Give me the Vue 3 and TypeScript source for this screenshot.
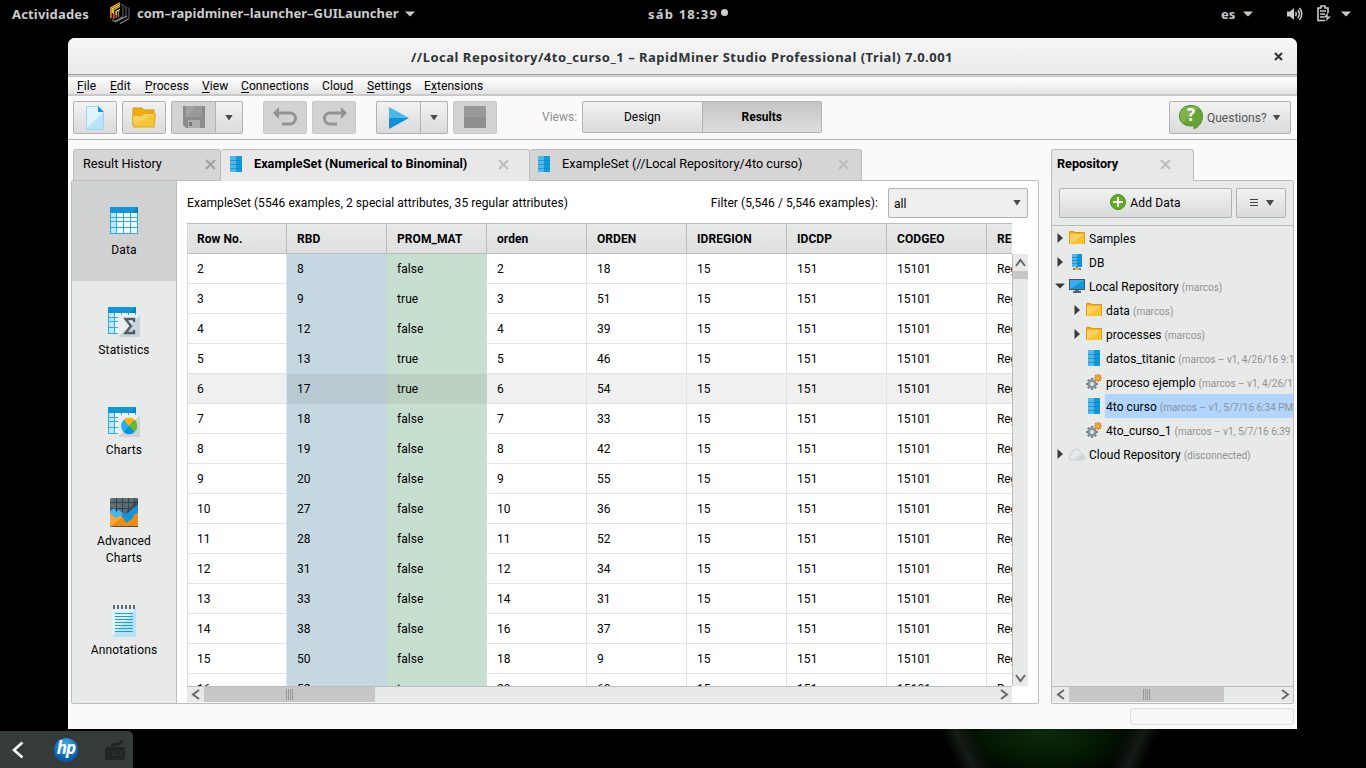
<script setup lang="ts">
interface MenuEntry { pre: string; key: string; post: string; width: number }
interface TreeNode {
  label: string
  note?: string
  icon: 'folder' | 'db' | 'screen' | 'data' | 'process' | 'cloud'
  level: number
  toggle?: 'open' | 'closed'
  selected?: boolean
}

const menus: MenuEntry[] = [
  { pre: '', key: 'F', post: 'ile', width: 33 },
  { pre: '', key: 'E', post: 'dit', width: 35 },
  { pre: '', key: 'P', post: 'rocess', width: 57 },
  { pre: '', key: 'V', post: 'iew', width: 39 },
  { pre: '', key: 'C', post: 'onnections', width: 81 },
  { pre: 'Clou', key: 'd', post: '', width: 45 },
  { pre: '', key: 'S', post: 'ettings', width: 57 },
  { pre: 'E', key: 'x', post: 'tensions', width: 70 },
]

const columns: string[] = ['Row No.', 'RBD', 'PROM_MAT', 'orden', 'ORDEN', 'IDREGION', 'IDCDP', 'CODGEO', 'REGION']

const source: [number, number, boolean, number, number][] = [
  [2, 8, false, 2, 18],
  [3, 9, true, 3, 51],
  [4, 12, false, 4, 39],
  [5, 13, true, 5, 46],
  [6, 17, true, 6, 54],
  [7, 18, false, 7, 33],
  [8, 19, false, 8, 42],
  [9, 20, false, 9, 55],
  [10, 27, false, 10, 36],
  [11, 28, false, 11, 52],
  [12, 31, false, 12, 34],
  [13, 33, false, 14, 31],
  [14, 38, false, 16, 37],
  [15, 50, false, 18, 9],
  [16, 52, true, 20, 60],
]
const rows = source.map((r) => [...r.map(String), '15', '151', '15101', 'Region'])

const tree: TreeNode[] = [
  { label: 'Samples', icon: 'folder', level: 0, toggle: 'closed' },
  { label: 'DB', icon: 'db', level: 0, toggle: 'closed' },
  { label: 'Local Repository', note: '(marcos)', icon: 'screen', level: 0, toggle: 'open' },
  { label: 'data', note: '(marcos)', icon: 'folder', level: 1, toggle: 'closed' },
  { label: 'processes', note: '(marcos)', icon: 'folder', level: 1, toggle: 'closed' },
  { label: 'datos_titanic', note: '(marcos – v1, 4/26/16 9:13 PM)', icon: 'data', level: 1 },
  { label: 'proceso ejemplo', note: '(marcos – v1, 4/26/16 9:20 PM)', icon: 'process', level: 1 },
  { label: '4to curso', note: '(marcos – v1, 5/7/16 6:34 PM)', icon: 'data', level: 1, selected: true },
  { label: '4to_curso_1', note: '(marcos – v1, 5/7/16 6:39 PM)', icon: 'process', level: 1 },
  { label: 'Cloud Repository', note: '(disconnected)', icon: 'cloud', level: 0, toggle: 'closed' },
]
const teeth = [0, 45, 90, 135, 180, 225, 270, 315]
</script>

<template>
  <div class="desktop">
    <header class="topbar">
      <span class="activities">Actividades</span>
      <svg class="app-logo" width="20" height="22" viewBox="0 0 20 22" fill="none" stroke-width="1.3">
        <path d="M.8 16V6L10 .8M3.6 17V8L10 4.2" stroke="#f4b63a" />
        <path d="M.8 16V10M3.6 17V12M6.2 16V11" stroke="#f0602a" />
        <path d="M6.2 13V9.5L10 7.5M2.200 11V7L10 2.500" stroke="#ffe32a" />
        <path d="M11 2l2 1v12M14.500 4l1.500 1v11M17.500 5.500l1.500 1V16" stroke="#4d4d55" />
        <path d="M2 18l3 1.500L13 15M5 20l12-6M10 21.500l9-5M8.500 15V9" stroke="#8a8a90" />
      </svg>
      <span class="app-name">com–rapidminer–launcher–GUILauncher</span>
      <svg class="caret" width="10" height="6"><path d="M0 .5h10L5 5.500z" fill="#ccc" /></svg>
      <span class="clock">sáb 18:39</span>
      <i class="clock-dot"></i>
      <span class="lang">es</span>
      <svg class="caret lang-caret" width="10" height="6"><path d="M0 .5h10L5 5.500z" fill="#ccc" /></svg>
      <svg class="volume" width="16" height="16" viewBox="0 0 16 16" fill="none" stroke="#ccc" stroke-width="1.500">
        <path d="M0 5.500h3L7 2v12l-4-3.500H0z" fill="#ccc" stroke="none" />
        <path d="M8.500 6q1.500 2 0 4M10.800 4q3 4 0 8M12.500 2q4.500 6 0 12" />
      </svg>
      <svg class="battery" width="15" height="17" viewBox="0 0 15 17" fill="none" stroke="#ccc" stroke-width="1.600">
        <path d="M8 15.500H1V3h3V1h4v2h3v5M3 6h6M3 9h5M3 12h4" />
        <path d="M11 7.500L6.500 12.500H10L8.500 16.500l5.500-5h-3.500z" fill="#ccc" stroke="none" />
      </svg>
      <svg class="caret" width="10" height="6"><path d="M0 .5h10L5 5.500z" fill="#ccc" /></svg>
    </header>

    <main class="window">
      <div class="titlebar">
        <span class="title">//Local Repository/4to_curso_1 – RapidMiner Studio Professional (Trial) 7.0.001</span>
        <svg class="win-close" width="9" height="9"><path d="M1 1l7 7M8 1L1 8" stroke="#2e3436" stroke-width="2" /></svg>
      </div>
      <nav class="menubar">
        <span v-for="m in menus" :key="m.post + m.pre" :style="{ width: m.width + 'px' }" class="menu"><span>{{ m.pre }}<u>{{ m.key }}</u>{{ m.post }}</span></span>
      </nav>

      <div class="toolbar">
        <button class="btn tool">
          <svg width="18" height="24"><path d="M.5.5H12l5.500 6v17H.5z" fill="#b9e3f8" stroke="#9fd3ed" /><path d="M1 1h11l5 6L1 22z" fill="#e0f3fc" /><path d="M12 0v6h6z" fill="#1596d4" /></svg>
        </button>
        <button class="btn tool">
          <svg width="24" height="21"><path d="M1 18V1h9l2 2h10v10z" fill="#f2ab0c" stroke="#d99808" /><path d="M.5 8.500l9 .5 2-2h12l-1.500 13H1.500z" fill="#f6c535" stroke="#e1a81b" /><path d="M1 9h9l2-2h11L2 18z" fill="#f7d063" /></svg>
        </button>
        <div class="btn split">
          <span class="tool-half off">
            <svg width="22" height="22"><path d="M0 0h22v22H3l-3-3z" fill="#8b8b8b" /><path d="M3 0h16v11H3z" fill="#a2a2a2" /><path d="M12 0h7v11H5z" fill="#999" /><path d="M5 14h12v8H5z" fill="#adadad" /><path d="M6 16h3v4H6z" fill="#777" /></svg>
          </span>
          <span class="arrow-half"><i class="down"></i></span>
        </div>
        <button class="btn tool off gap20">
          <svg width="25" height="20" fill="none" stroke="#939393" stroke-width="3"><path d="M5 6h12a5.500 5.500 0 0 1 0 11H9" /><path d="M0 6l6-6v12z" fill="#939393" stroke="none" /></svg>
        </button>
        <button class="btn tool off">
          <svg width="25" height="20" fill="none" stroke="#939393" stroke-width="3"><path d="M20 6H8a5.500 5.500 0 0 0 0 11h7" /><path d="M25 6l-6-6v12z" fill="#939393" stroke="none" /></svg>
        </button>
        <div class="btn split gap20">
          <span class="tool-half"><svg width="20" height="22"><path d="M0 0l20 11H0z" fill="#49b8ea" /><path d="M0 22l20-11H0z" fill="#0f90d8" /></svg></span>
          <span class="arrow-half"><i class="down"></i></span>
        </div>
        <button class="btn tool off"><svg class="stop" width="22" height="22"><path d="M0 0h22v11H0z" fill="#999" /><path d="M0 11h22v11H0z" fill="#8e8e8e" /></svg></button>
        <span class="views-label">Views:</span>
        <div class="views"><span>Design</span><span class="current">Results</span></div>
        <button class="btn questions">
          <svg width="24" height="24"><path d="M12 .5C5 .5.5 5 .5 11S5 21 12 21l3-.5v3.300C20 22 23.500 17 23.500 11 23.500 5 19 .5 12 .5z" fill="#67a33b" stroke="#548c2c" /><path d="M19 3L4 18C-2 10 2 2 12 1q4 0 7 2z" fill="#80b34a" /></svg>
          <b class="q-mark">?</b>
          <span>Questions?</span><i class="down"></i>
        </button>
      </div>

      <div class="workspace">
        <section class="results">
          <div class="tabs">
            <div class="tab history"><span>Result History</span><svg class="x dark" width="11" height="11"><path d="M1 1l9 9M10 1l-9 9" /></svg></div>
            <div class="tab active">
              <svg class="data-icon" width="12" height="16"><path d="M0 0h12v16H0z" fill="#119ad9" /><path d="M0 0h6v16H0z" fill="#4cb9ea" /><path d="M0 4.500h12M0 8.500h12M0 12.500h12" stroke="#0876b0" stroke-opacity=".5" /></svg>
              <b>ExampleSet (Numerical to Binominal)</b><svg class="x" width="11" height="11"><path d="M1 1l9 9M10 1l-9 9" /></svg>
            </div>
            <div class="tab third">
              <svg class="data-icon" width="12" height="16"><path d="M0 0h12v16H0z" fill="#119ad9" /><path d="M0 0h6v16H0z" fill="#4cb9ea" /><path d="M0 4.500h12M0 8.500h12M0 12.500h12" stroke="#0876b0" stroke-opacity=".5" /></svg>
              <span>ExampleSet (//Local Repository/4to curso)</span><svg class="x" width="11" height="11"><path d="M1 1l9 9M10 1l-9 9" /></svg>
            </div>
          </div>

          <div class="panel">
            <aside class="sidebar">
              <div v-for="name in ['Data', 'Statistics', 'Charts']" :key="name" class="side" :class="{ chosen: name === 'Data', shifted: name !== 'Data' }">
                <svg width="32" height="30">
                  <path d="M0 0h28v27H0z" fill="#2eaae8" />
                  <path d="M1 6h5v4H1zM1 11h5v3H1zM1 15h5v5H1zM1 21h5v5H1z" fill="#bfe6fa" />
                  <path d="M7 6h6v4H7zM14 6h6v4h-6zM21 6h6v4h-6zM7 11h6v3H7zM14 11h6v3h-6zM21 11h6v3h-6zM7 15h6v5H7zM14 15h6v5h-6zM21 15h6v5h-6zM7 21h6v5H7zM14 21h6v5h-6zM21 21h6v5h-6z" fill="#f1fafe" />
                  <path d="M0 0h28v6H0z" fill="#1296db" /><path d="M28 0v6h-6z" fill="#0b7fbe" />
                  <g v-if="name !== 'Data'">
                    <path d="M10 8h22v22H10z" fill="#ebeeef" /><path d="M32 8v22H10z" fill="#cbd4d8" />
                    <path v-if="name === 'Statistics'" d="M26 15v-3H17.500l5.500 7-5.500 7H26v-3" fill="none" stroke="#4d6069" stroke-width="2.400" />
                    <template v-else>
                      <circle cx="21" cy="19" r="8" fill="#27b0f0" />
                      <path d="M21 19l-5-6.500a8 8 0 0 1 10.500 0z" fill="#ffb400" />
                      <path d="M21 19l5.500-6.200a8 8 0 0 1 0 12z" fill="#68b723" />
                      <path d="M21 19l5.500 6a8 8 0 0 1-11 0z" fill="#0b8fe0" />
                    </template>
                  </g>
                </svg>
                <span>{{ name }}</span>
              </div>
              <div class="side advanced">
                <svg width="28" height="29">
                  <rect width="28" height="29" rx="1.500" fill="#5c6e76" /><path d="M28 0v29H3z" fill="#42525a" />
                  <path d="M6.500 0v14M12.500 0v14M18.500 0v14M24.500 0v14M0 4.500h28M0 10.500h28" stroke="#34434a" />
                  <path d="M0 14l4-4 2 4 3-2 4 4 5-1 3-3 4-3 3-2v18H0z" fill="#1196dc" /><path d="M0 14l4-4 2 4 3-2 4 4-8 8-5-4z" fill="#40b9f0" />
                  <path d="M0 15l3 3 3 2 4-2 4 3 2 4 6-4 3-5 3-1v13H1l-1-1z" fill="#ef8d10" /><path d="M0 15l3 3 3 2 4-2 3 1L1 28H0z" fill="#f5a63d" />
                </svg>
                <span>Advanced<br />Charts</span>
              </div>
              <div class="side annotations">
                <svg width="24" height="33"><path d="M0 3h24v29H0z" fill="#b9e2f7" /><path d="M0 3h24L0 32z" fill="#dff3fd" /><path d="M2 0v4M6 0v4M10 0v4M14 0v4M18 0v4M22 0v4" stroke="#5c6b73" stroke-width="2" /><path d="M3 8.500h18M3 11.500h18M3 14.500h18M3 17.500h18M3 20.500h18M3 23.500h18M3 26.500h18" stroke="#1b9ce2" /></svg>
                <span>Annotations</span>
              </div>
            </aside>

            <div class="content">
              <div class="info">
                <span>ExampleSet (5546 examples, 2 special attributes, 35 regular attributes)</span>
                <span class="filter">Filter (5,546 / 5,546 examples):</span>
                <div class="select"><span>all</span><i class="down"></i></div>
              </div>
              <div class="grid">
                <div class="grid-left">
                  <div class="grid-head"><span v-for="c in columns" :key="c" class="cell">{{ c }}</span></div>
                  <div class="grid-body">
                    <div v-for="(row, i) in rows" :key="i" class="row" :class="{ hover: i === 4 }"><span v-for="(v, j) in row" :key="j" class="cell">{{ v }}</span></div>
                  </div>
                  <div class="hscroll">
                    <svg class="chev" width="17" height="15"><path d="M12 3L6 7.500l6 4.500" /></svg>
                    <div class="thumb main-thumb"><i class="grip"></i></div>
                    <svg class="chev end" width="17" height="15"><path d="M6 3l6 4.500L6 12" /></svg>
                  </div>
                </div>
                <div class="vscroll">
                  <svg class="chev" width="15" height="17"><path d="M3 12l4.500-6 4.500 6" /></svg>
                  <div class="vthumb"></div>
                  <svg class="chev bottom" width="15" height="17"><path d="M3 6l4.500 6L12 6" /></svg>
                </div>
              </div>
            </div>
          </div>
        </section>

        <section class="repository">
          <div class="tab repo-tab"><b>Repository</b><svg class="x" width="11" height="11"><path d="M1 1l9 9M10 1l-9 9" /></svg></div>
          <div class="repo-panel">
            <div class="repo-actions">
              <button class="btn add">
                <svg width="16" height="16"><circle cx="8" cy="8" r="7.500" fill="#5fae22" stroke="#46901a" /><path d="M8 3v10M3 8h10" stroke="#fff" stroke-width="2" /></svg>
                <span>Add Data</span>
              </button>
              <button class="btn options"><svg width="8" height="8"><path d="M0 .5h8M0 3.500h8M0 6.500h8" stroke="#444" /></svg><i class="down"></i></button>
            </div>
            <div class="tree">
              <div v-for="n in tree" :key="n.label" class="node" :class="{ nested: n.level === 1 }">
                <span class="toggle"><svg v-if="n.toggle === 'closed'" width="6" height="10"><path d="M.5 0L6 5 .5 10z" fill="#3b3b3b" /></svg><svg v-if="n.toggle === 'open'" class="open" width="10" height="6"><path d="M0 .5h10L5 5.500z" fill="#3b3b3b" /></svg></span>
                <svg v-if="n.icon === 'folder'" class="ico" width="16" height="16"><path d="M.5 13.500v-12H5l1 1h9.500v11z" fill="#f3ad12" stroke="#dd9b0b" /><path d="M1 4h14v10H1z" fill="#f5c42f" /><path d="M1 4h14L1 14z" fill="#f8d161" /></svg>
                <svg v-else-if="n.icon === 'db'" class="ico" width="16" height="16"><path d="M3 0h10v13H3z" fill="#0f96d8" /><path d="M3 0h5v13H3z" fill="#4bb9e9" /><path d="M3 3.500h10M3 6.500h10M3 9.500h10" stroke="#0873ad" stroke-opacity=".55" /><path d="M8 13v2M4 15h8" stroke="#777" stroke-width="2" /><path d="M6 14h4v2H6z" fill="#f6b51c" /></svg>
                <svg v-else-if="n.icon === 'screen'" class="ico" width="16" height="16"><path d="M0 1h16v11H0z" fill="#45545c" /><path d="M1 2h14v9H1z" fill="#1597dc" /><path d="M1 2h14L1 11z" fill="#35b0ed" /><path d="M6 12h4v1h2v2H4v-2h2z" fill="#56646c" /></svg>
                <svg v-else-if="n.icon === 'data'" class="ico" width="16" height="16"><path d="M2 0h12v16H2z" fill="#119ad9" /><path d="M2 0h6v16H2z" fill="#4cb9ea" /><path d="M2 4.500h12M2 8.500h12M2 12.500h12" stroke="#0876b0" stroke-opacity=".5" /></svg>
                <svg v-else-if="n.icon === 'process'" class="ico" width="16" height="16">
                  <g stroke="#687983" stroke-width="2"><path v-for="a in teeth" :key="a" d="M6 4v3" :transform="`rotate(${a} 6 10)`" /></g><circle cx="6" cy="10" r="3.300" fill="none" stroke="#84959d" stroke-width="2.800" />
                  <g stroke="#ef8318" stroke-width="1.600"><path v-for="a in teeth" :key="a" d="M12 0v2" :transform="`rotate(${a} 12 4)`" /></g><circle cx="12" cy="4" r="2" fill="none" stroke="#f29330" stroke-width="2" />
                </svg>
                <svg v-else class="ico" width="16" height="16"><path d="M3 14a3 3 0 0 1 0-6 4 4 0 0 1 4-5q3-1 4.500 3.500Q15.500 8 15.500 12q0 2-2 2z" fill="#e5e9eb" stroke="#c7cdd0" /><path d="M13 8L5 13.500h8q2-1 2-3z" fill="#cfd6d9" /></svg>
                <span class="node-text" :class="{ selected: n.selected }">{{ n.label }}<small v-if="n.note">{{ n.note }}</small></span>
              </div>
            </div>
            <div class="hscroll">
              <svg class="chev" width="17" height="15"><path d="M12 3L6 7.500l6 4.500" /></svg>
              <div class="thumb repo-thumb"><i class="grip"></i></div>
              <svg class="chev end" width="17" height="15"><path d="M6 3l6 4.500L6 12" /></svg>
            </div>
          </div>
        </section>
      </div>
      <div class="statusbar"><div class="progress"></div></div>
    </main>

    <div class="glow"></div>
    <div class="dock">
      <svg class="back" width="12" height="18"><path d="M10.500 1.500L2 9l8.500 7.500" fill="none" stroke="#fff" stroke-width="2.600" /></svg>
      <div class="hp"><span>hp</span></div>
      <svg class="keyboard" width="24" height="22"><path d="M3 8h18l1 3v9l-2 1H3l-1-1v-9z" fill="#202525" /><path d="M9 8q0-3 4-3 5 1 6-4" fill="none" stroke="#202525" stroke-width="3" /><path d="M5 13h2M9 13h2M13 13h2M17 13h2M5 16h2M9 16h6M17 16h2" stroke="#343a3a" /></svg>
    </div>
  </div>
</template>

<style>
html, body { margin: 0; background: #000; overflow: hidden; }
</style>

<style scoped>
* { box-sizing: border-box; }
.desktop { position: relative; width: 1366px; height: 768px; background: #000; overflow: hidden; font: 12px/16px Roboto, sans-serif; color: #000; }
svg { display: block; flex: none; }
.topbar { height: 38px; display: flex; align-items: flex-start; padding: 4px 15px 0 12px; color: #ccc; font: bold 13px/20px "Noto Sans", sans-serif; white-space: nowrap; }
.activities { width: 98px; letter-spacing: 0.17px; }
.app-logo { margin-top: -2px; }
.app-name { width: 262px; margin-left: 7px; margin-top: -1px; }
.caret { margin: 7px 0 0 6px; }
.clock { width: 71px; margin-left: 233px; letter-spacing: 1.2px; }
.clock-dot { width: 7px; height: 7px; border-radius: 50%; background: #ccc; margin: 5px 0 0 2px; }
.lang { margin-left: auto; width: 15px; }
.lang-caret { margin-left: 7px; }
.volume { margin: 2px 0 0 34px; }
.battery { margin: 1px 3px 0 14px; }

.window { width: 1229px; height: 691px; margin-left: 68px; background: #fafafa; border-radius: 7px 7px 0 0; overflow: hidden; display: flex; flex-direction: column; position: relative; z-index: 1; }
.titlebar { height: 39px; display: flex; align-items: center; justify-content: center; position: relative; background: linear-gradient(#f6f6f6, #ebebeb 35px); border-bottom: 1px solid #c9c9c9; box-shadow: inset 0 -1px #d8d8d8, inset 0 -2px #a0a0a0; font: bold 13px/20px "Noto Sans", sans-serif; color: #2e3436; padding-right: 1px; white-space: nowrap; }
.title { letter-spacing: 0.5px; }
.win-close { position: absolute; right: 14px; top: 14px; }
.menubar { height: 19px; display: flex; padding-left: 9px; background: linear-gradient(#fff, #e4e4e4); border-bottom: 2px solid #c9c9c9; line-height: 18px; }
.menu { flex: none; white-space: nowrap; letter-spacing: 0.08px; }
.menu u { text-underline-offset: 2px; }
.toolbar { height: 44px; display: flex; padding: 5px 6px 0 5px; border-bottom: 1px solid #b4b4b4; }
.btn { display: flex; align-items: center; justify-content: center; font: inherit; border: 1px solid #b2b2b2; border-radius: 2px; padding: 0; background: linear-gradient(#f2f2f2, #dadada); }
.tool { width: 44px; height: 33px; margin-right: 5px; flex: none; }
.off { background: #d2d2d2; border-color: #c8c8c8; }
.off svg { margin-top: -1px; }
.split { width: 72px; height: 33px; align-items: stretch; margin-right: 5px; }
.tool-half { width: 44px; display: flex; align-items: center; justify-content: center; border-right: 1px solid #b2b2b2; }
.arrow-half { flex: 1; display: flex; align-items: center; justify-content: center; }
.gap20 { margin-left: 15px; }
.down { width: 8px; height: 6px; background: #4a4a4a; clip-path: polygon(0 0, 100% 0, 50% 100%); flex: none; }
.views-label { margin-left: 40px; width: 40px; line-height: 32px; color: #8b8b8b; }
.views { width: 240px; height: 32px; display: flex; border: 1px solid #b2b2b2; border-radius: 2px; background: linear-gradient(#f2f2f2, #dadada); line-height: 30px; text-align: center; }
.views span { flex: 1; }
.views .current { font-weight: bold; border-left: 1px solid #b2b2b2; background: linear-gradient(#c4c4c4, #dedede); }
.questions { width: 122px; height: 33px; margin-left: auto; color: #555; justify-content: flex-start; padding-left: 9px; position: relative; }
.questions svg { margin-top: -1px; }
.questions span { margin: 0 6px 0 4px; }
.q-mark { position: absolute; left: 9px; top: 3px; width: 24px; text-align: center; color: #fff; font: bold 17px/20px "Open Sans", sans-serif; }

.workspace { height: 564px; display: flex; padding: 9px 3px 0; justify-content: space-between; }
.results { width: 968px; }
.tabs { display: flex; height: 32px; padding-left: 2px; position: relative; z-index: 1; }
.tab { height: 32px; border: 1px solid #bcbcbc; border-radius: 3px 3px 0 0; background: #d5d5d5; display: flex; align-items: center; padding-bottom: 3px; white-space: nowrap; font-size: 12.700px; }
.tab.history { width: 148px; padding-left: 9px; }
.tab.active { width: 309px; background: #e8e8e8; border-bottom-color: #e8e8e8; border-left: 0; padding-left: 9px; }
.tab.third { width: 332px; border-left: 0; padding-left: 8px; }
.x { margin-left: auto; stroke: #bcbcbc; stroke-width: 2; margin-right: 20px; margin-top: 1px; }
.third .x { margin-right: 12px; }
.x.dark { stroke: #a0a0a0; margin-right: 4px; }
.data-icon { margin-right: 12px; }
.panel { margin-top: -1px; height: 524px; display: flex; border: 1px solid #bcbcbc; border-radius: 2px; background: #fff; overflow: hidden; }
.sidebar { width: 105px; background: #e8eae9; border-right: 1px solid #bcbcbc; }
.side { height: 100px; display: flex; flex-direction: column; align-items: center; padding-top: 26px; text-align: center; line-height: 17px; letter-spacing: 0.150px; }
.side svg { height: 30px; margin-left: 4px; margin-bottom: 5px; }
.side.shifted svg { margin-left: 0; }
.side.chosen { background: #d0d1d1; }
.side.advanced { height: 107px; padding-top: 17px; }
.side.advanced svg { margin-left: 0; margin-bottom: 5px; }
.side.annotations { padding-top: 17px; }
.side.annotations svg { height: 33px; margin-left: 0; margin-bottom: 4px; }
.content { flex: 1; padding: 7px 10px 0; }
.info { height: 35px; display: flex; line-height: 30px; letter-spacing: 0.065px; }
.filter { margin-left: auto; margin-right: 10px; }
.select { width: 140px; height: 30px; border: 1px solid #b2b2b2; border-radius: 2px; background: #efefef; display: flex; align-items: center; justify-content: space-between; padding: 2px 6px 0 5px; }
.select .down { margin-top: -3px; }
.grid { display: flex; height: 480px; }
.grid-left { width: 825px; overflow: hidden; }
.grid-head, .row { display: flex; width: 900px; }
.grid-head { height: 31px; border: solid #bcbcbc; border-width: 1px 0; font-weight: bold; background: linear-gradient(#e8e9e9, #dfdfdf); }
.cell { width: 100px; flex: none; height: 30px; padding-left: 10px; line-height: 30px; border-right: 1px solid #e2e2e2; border-bottom: 1px solid #e2e2e2; letter-spacing: 0.070px; }
.row .cell:last-child { letter-spacing: -0.150px; }
.cell:first-child { border-left: 1px solid #d8d8d8; padding-left: 9px; }
.grid-head .cell { height: 29px; border-bottom: 0; border-right-color: #bcbcbc; }
.grid-body { height: 432px; overflow: hidden; }
.row.hover { background: #f0f0f0; }
.row .cell:nth-child(2) { background: #c5d8e1; border-color: #c5d8e1; }
.row .cell:nth-child(3) { background: #c7dfce; border-color: #c7dfce; }
.row.hover .cell:nth-child(2) { background: #b9cad3; border-color: #b9cad3; }
.row.hover .cell:nth-child(3) { background: #bbd1c1; border-color: #bbd1c1; }
.hscroll { height: 17px; border-top: 1px solid #bcbcbc; border-bottom: 1px solid #f5f5f5; background: #e8eae9; display: flex; align-items: stretch; }
.chev { fill: none; stroke: #686868; stroke-width: 2; }
.end { margin-left: auto; }
.thumb { background: #c6c7c6; display: flex; align-items: center; justify-content: center; }
.main-thumb { width: 171px; }
.repo-thumb { width: 155px; }
.grip { width: 7px; height: 11px; background: repeating-linear-gradient(90deg, #989898 0 1px, transparent 1px 2px); }
.vscroll { width: 16px; height: 432px; margin-top: 31px; border-left: 1px solid #bcbcbc; background: #e8eae9; display: flex; flex-direction: column; }
.vthumb { height: 8px; background: #c6c7c6; }
.bottom { margin-top: auto; }

.repository { width: 243px; }
.repo-tab { width: 143px; padding-left: 5px; background: #e8e8e8; border-bottom: 0; position: relative; z-index: 1; }
.repo-tab b { letter-spacing: -0.050px; }
.repo-tab .x { margin-right: 22px; }
.repo-panel { height: 524px; margin-top: -1px; border: 1px solid #bcbcbc; border-radius: 0 2px 2px 2px; background: #e8eae9; display: flex; flex-direction: column; overflow: hidden; }
.repo-actions { height: 45px; flex: none; border-bottom: 1px solid #bcbcbc; display: flex; padding: 7px 7px 0; gap: 4px; }
.add { width: 173px; height: 30px; gap: 4px; letter-spacing: 0.150px; }
.add svg { margin-top: -2px; }
.options { width: 50px; height: 30px; gap: 8px; padding-left: 2px; }
.tree { flex: 1; overflow: hidden; }
.node { height: 24px; display: flex; align-items: center; padding-left: 5px; white-space: nowrap; }
.node.nested { padding-left: 22px; }
.toggle { width: 12px; flex: none; }
.toggle svg { margin-top: -1px; }
.toggle .open { margin-left: -2px; }
.ico { margin-right: 3px; }
.node-text { height: 24px; line-height: 24px; padding: 1px 1px 0; flex: none; letter-spacing: 0.050px; }
.node-text.selected { background: #b0d5ff; flex: 1 0 auto; }
small { font-size: 10px; color: #919191; margin-left: 3px; letter-spacing: 0; }
.statusbar { height: 25px; padding: 4px 3px 0 0; display: flex; justify-content: flex-end; }
.progress { width: 164px; height: 17px; border: 1px solid #dedede; border-radius: 3px; background: #f7f7f7; }

.glow { position: absolute; left: 900px; top: 729px; width: 300px; height: 39px; background: linear-gradient(65deg, transparent 18%, #151b15 23%, transparent 29%), linear-gradient(-65deg, transparent 18%, #151b15 23%, transparent 29%), radial-gradient(ellipse 100px 48px at 145px 5px, #0b2b0b, #031703 60%, transparent); }
.dock { position: absolute; left: 0; top: 731px; width: 133px; height: 37px; background: #353a3a; border-radius: 0 5px 0 0; display: flex; align-items: center; padding-left: 12px; }
.hp { width: 24px; height: 24px; border-radius: 50%; margin-left: 30px; background: radial-gradient(circle at 50% 25%, #42a9e6, #0862ae 65%, #0a4a8e); color: #fff; display: flex; justify-content: center; }
.hp span { font: italic bold 17px/20px "Open Sans", sans-serif; letter-spacing: -1px; }
.keyboard { margin-left: 25px; }
</style>
